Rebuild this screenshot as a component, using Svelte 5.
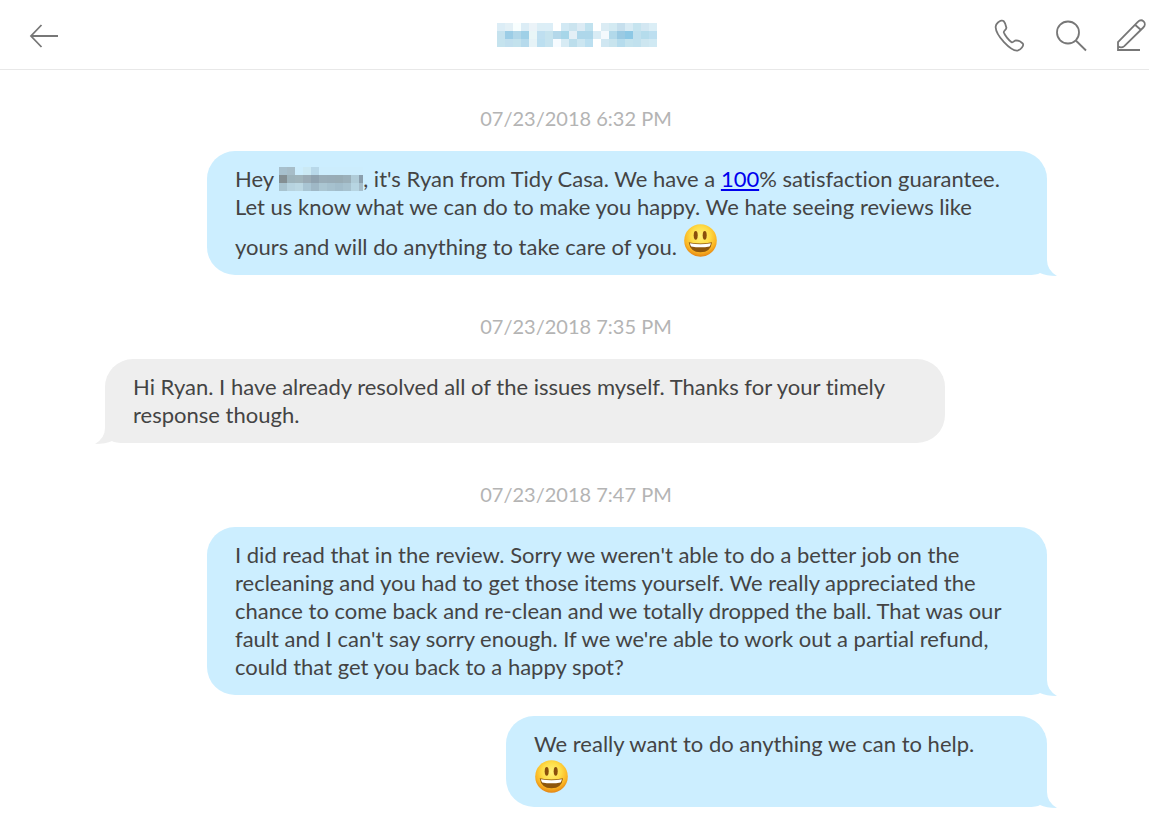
<script lang="ts">
    interface Part {
        kind: "text" | "link" | "name" | "emoji" | "emoji-line";
        value?: string;
    }

    interface Message {
        id: number;
        time?: string;
        side: "sent" | "received";
        roomy?: boolean;
        parts: Part[];
    }

    const messages: Message[] = [
        {
            id: 1,
            time: "07/23/2018 6:32 PM",
            side: "sent",
            parts: [
                { kind: "text", value: "Hey " },
                { kind: "name" },
                { kind: "text", value: ", it's Ryan from Tidy Casa. We have a " },
                { kind: "link", value: "100" },
                {
                    kind: "text",
                    value: "% satisfaction guarantee. Let us know what we can do to make you happy. We hate seeing reviews like yours and will do anything to take care of you. ",
                },
                { kind: "emoji" },
            ],
        },
        {
            id: 2,
            time: "07/23/2018 7:35 PM",
            side: "received",
            parts: [
                {
                    kind: "text",
                    value: "Hi Ryan. I have already resolved all of the issues myself. Thanks for your timely response though.",
                },
            ],
        },
        {
            id: 3,
            time: "07/23/2018 7:47 PM",
            side: "sent",
            parts: [
                {
                    kind: "text",
                    value: "I did read that in the review. Sorry we weren't able to do a better job on the recleaning and you had to get those items yourself. We really appreciated the chance to come back and re-clean and we totally dropped the ball. That was our fault and I can't say sorry enough. If we we're able to work out a partial refund, could that get you back to a happy spot?",
                },
            ],
        },
        {
            id: 4,
            side: "sent",
            roomy: true,
            parts: [
                { kind: "text", value: "We really want to do anything we can to help." },
                { kind: "emoji-line" },
            ],
        },
    ];

    // redacted names, one colour per 8px tile, row by row
    const contactTiles = [
        "#dcedf6 #e3f0f6 #f8fefe #dcedf6 #ebf3f8 #dceef6 #dceef7 #ffffff #d2e9f4 #cbe4ef #dcebf4 #c1e2ef #ffffff #dbecf4 #d3eaf2 #c6dfed #d8ebf4 #c6e4ef #d3e7f2 #dbeef6",
        "#c5e2ee #9ccde6 #b1d7e9 #9fd0e7 #e9f6f7 #bfdff0 #c6e3ee #b4d8ea #a7d6e9 #e3eff6 #aed7ea #aed7ea #d9ecf5 #f3f9fd #b2d9ea #9acae3 #8dc8e5 #c0e0ee #b5dcec #bddff0",
        "#c5e3ee #c1dfee #c3e2ed #b6daec #e6f3f7 #bcdff0 #c6e3ef #f6fbff #d7ebf4 #bcdeec #cce6f1 #bbdff0 #ffffff #d0e7f2 #c8e4ee #b6dced #c4e3ee #c1e1ee #cde6f0 #d0e9f3",
    ].map((row) => row.split(" "));

    const nameTiles = [
        "#a7c0cd #a7bdc8 #ccedfd #cbe9f4 #b8d8e9 #ccedfd #ccedfd #ccedfd #ccedfd #ccedfd #ccedfd",
        "#848f93 #9db3bb #a0b4bb #9aabb5 #8fa2af #99adb8 #98acb7 #98acb5 #9bb0ba #b0ccd8 #8b9fad",
        "#a8c3cf #b7d3df #bbd7e2 #a9c5d3 #9fb8c6 #abc6d2 #a6c1ce #a2bdcb #a7c2cf #b7d5e2 #a6becb",
    ].map((row) => row.split(" "));
</script>

{#snippet mosaic(rows: string[][], label: string)}
    <svg
        class="mosaic"
        width={rows[0].length * 8}
        height="24"
        viewBox="0 0 {rows[0].length * 8} 24"
        preserveAspectRatio="xMinYMin slice"
        shape-rendering="crispEdges"
        role="img"
        aria-label={label}
    >
        {#each rows as row, y}
            {#each row as color, x}
                <rect x={x * 8} y={y * 8} width="8" height="8" fill={color} />
            {/each}
        {/each}
    </svg>
{/snippet}

{#snippet emoji(cls: string)}
    <svg class="emoji {cls}" width="34" height="33" viewBox="0 0 34 33" role="img" aria-label="grinning face">
        <circle cx="17.5" cy="16.5" r="16.3" fill="url(#face)" />
        <ellipse cx="12.7" cy="11.3" rx="2" ry="4.4" fill="#8a4f0b" />
        <ellipse cx="21.7" cy="11.3" rx="2" ry="4.4" fill="#8a4f0b" />
        <path d="M5.7 18.2Q17.5 20.6 29 18.2Q27.8 28.2 17.5 28.2T5.7 18.2Z" fill="#8d560d" />
        <path d="M6.9 19.3Q17.5 21.4 27.9 19.3Q27.6 21.2 26.6 22.4Q17.5 24.2 8.2 22.4Q7.2 21.2 6.9 19.3Z" fill="#fff" />
    </svg>
{/snippet}

<svg class="defs" width="0" height="0" aria-hidden="true">
    <defs>
        <radialGradient id="face" cx="0.5" cy="0.36" r="0.66">
            <stop offset="0" stop-color="#fff27a" />
            <stop offset="0.45" stop-color="#fedc45" />
            <stop offset="0.75" stop-color="#fbb523" />
            <stop offset="1" stop-color="#e07d12" />
        </radialGradient>
    </defs>
</svg>

<div class="page">
    <header>
        <button class="back" aria-label="Back">
            <svg width="30" height="24" viewBox="0 0 30 24">
                <path d="M29 12H2M12.5 1L2 12L12.5 23" />
            </svg>
        </button>
        <div class="contact">{@render mosaic(contactTiles, "Contact")}</div>
        <div class="actions">
            <button aria-label="Call">
                <svg width="32" height="34" viewBox="0 0 32 34">
                    <path
                        d="M4.2 4.3C6 2.5 8.6 2.2 9.7 3.2C11.2 4.8 12 7.8 12.4 9.7C12.6 11.6 9.6 12.5 9.8 14.2C10.6 17.2 14.8 22.2 17.6 24.2C19.3 25 20.2 22.3 22 22.3C24.2 22.4 27.4 23.9 28.9 25.7C30.1 27.6 26.8 31.6 24 32.4C20 33.4 14.5 28.9 10 24.1C5.6 19.4 1.8 13.3 1.6 9C1.6 7 2.4 5.8 4.2 4.3Z"
                    />
                </svg>
            </button>
            <button aria-label="Search">
                <svg width="32" height="34" viewBox="0 0 32 34">
                    <circle cx="13" cy="14.5" r="11" />
                    <path d="M20.8 22.5L31 32.5" />
                </svg>
            </button>
            <button aria-label="Compose">
                <svg width="32" height="34" viewBox="0 0 32 34">
                    <path
                        d="M2 24.2L21.6 4.1C23.5 2.2 25.8 1.8 27.6 3.4C29.3 5.1 29.2 7.6 27.3 9.5L8.3 28.1C6.3 29.8 3.7 29.5 2 28.3M19 6.8L25 12M2 23.6V32H24"
                    />
                </svg>
            </button>
        </div>
    </header>

    <main>
        {#each messages as message (message.id)}
            {#if message.time}
                <time>{message.time}</time>
            {/if}
            <div class="bubble {message.side}" class:roomy={message.roomy}>
                <p>
                    {#each message.parts as part}{#if part.kind === "text"}{part.value}{:else if part.kind === "link"}<a href="#100">{part.value}</a>{:else if part.kind === "name"}<span class="name">{@render mosaic(nameTiles, "Name")}</span>{:else if part.kind === "emoji"}{@render emoji("inline")}{:else}{@render emoji("line")}{/if}{/each}
                </p>
                <svg class="tail" width="38" height="29" viewBox="0 0 38 29" aria-hidden="true">
                    <path d="M0 0H28V13Q28 23 38 29Q27 29 21 26Q18 28 8 28H0Z" />
                </svg>
            </div>
        {/each}
    </main>
</div>

<style>
    :global(body) {
        margin: 0;
        background: #fff;
    }
    .defs {
        position: absolute;
    }
    .page {
        font-family: Lato, "Liberation Sans", sans-serif;
        font-variant-ligatures: none;
        color: #444;
    }
    header {
        display: grid;
        grid-template-columns: 1fr auto 1fr;
        align-items: center;
        height: 69px;
        padding: 0 1px 0 29px;
        border-bottom: 1px solid #e8e8e8;
    }
    button {
        display: flex;
        padding: 0;
        border: 0;
        background: none;
        cursor: pointer;
    }
    button svg {
        fill: none;
        stroke: #777;
        stroke-width: 1.8;
    }
    .back {
        justify-self: start;
        margin-top: 3px;
    }
    .contact {
        display: flex;
        margin-right: 24px;
    }
    .actions {
        display: flex;
        justify-self: end;
        gap: 29px;
    }
    main {
        display: flex;
        flex-direction: column;
        padding: 13px 102px 16px 105px;
    }
    time {
        align-self: center;
        margin: 21px 0 19px;
        font-size: 20px;
        line-height: 28px;
        color: #b4b4b4;
    }
    .bubble + time {
        margin-top: 37px;
    }
    .bubble {
        position: relative;
        box-sizing: border-box;
        max-width: calc(100% - 102px);
        padding: 14px 28px;
        border-radius: 28px;
    }
    .bubble + .bubble {
        margin-top: 21px;
    }
    .sent {
        align-self: flex-end;
        background: #cef;
    }
    .received {
        align-self: flex-start;
        background: #eee;
    }
    .roomy {
        min-width: 541px;
    }
    p {
        margin: 0;
        font-size: 22px;
        line-height: 28px;
    }
    a {
        color: #00e;
    }
    .name .mosaic {
        width: 84px;
        margin: -4px 0;
    }
    .emoji.inline {
        margin: 3px 0 4px;
        vertical-align: -6px;
    }
    .emoji.line {
        display: block;
        margin-top: 2px;
    }
    .tail {
        position: absolute;
        bottom: -1px;
    }
    .sent .tail {
        right: -10px;
        fill: #cef;
    }
    .received .tail {
        left: -10px;
        fill: #eee;
        transform: scaleX(-1);
    }
</style>
